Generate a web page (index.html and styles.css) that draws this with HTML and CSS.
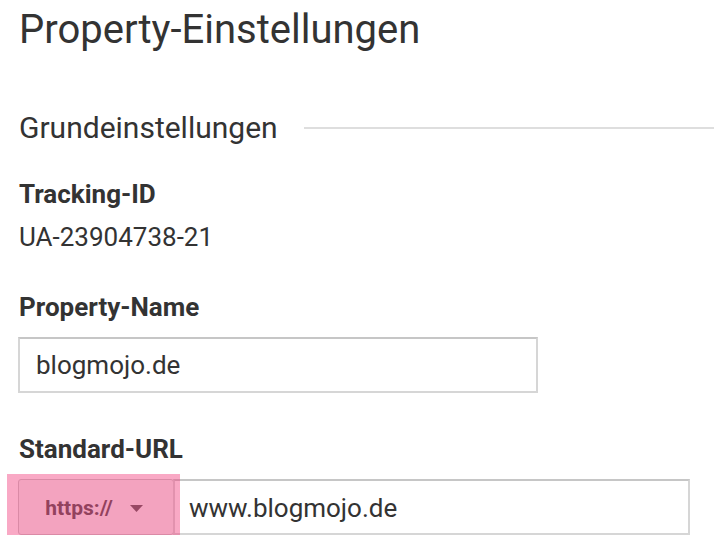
FILE: index.html
```html
<!DOCTYPE html>
<html lang="de">
<head>
<meta charset="utf-8">
<title>Property-Einstellungen</title>
<link rel="stylesheet" href="styles.css">
</head>
<body>
<main class="page">
  <h1 class="title">Property-Einstellungen</h1>
  <div class="section-head">
    <h2 class="section-title">Grundeinstellungen</h2>
    <div class="section-rule"></div>
  </div>
  <div class="field field-tracking">
    <div class="label">Tracking-ID</div>
    <div class="value">UA-23904738-21</div>
  </div>
  <div class="field field-name">
    <div class="label">Property-Name</div>
    <div class="text-input name-input">blogmojo.de</div>
  </div>
  <div class="field field-url">
    <div class="label">Standard-URL</div>
    <div class="url-row">
      <div class="protocol">
        <span class="protocol-text">https://</span>
        <svg class="caret" width="13" height="7" viewBox="0 0 13 7"><path d="M0 0 H13 L6.5 7 Z" fill="#555"/></svg>
      </div>
      <div class="text-input url-input">www.blogmojo.de</div>
      <div class="highlight"></div>
    </div>
  </div>
</main>
</body>
</html>
```
FILE: styles.css
```css
html, body {
  margin: 0;
  padding: 0;
  background: #fff;
}
body {
  font-family: Roboto, "Liberation Sans", sans-serif;
  color: #333;
  overflow: hidden;
}
.page {
  padding: 8px 0 0 19px;
}
.title {
  margin: 0;
  font-size: 40px;
  line-height: 44px;
  font-weight: 400;
  color: #333;
}
.section-head {
  display: flex;
  align-items: center;
  margin-top: 59px;
}
.section-title {
  margin: 0;
  font-size: 30px;
  line-height: 34px;
  font-weight: 400;
  color: #333;
  white-space: nowrap;
}
.section-rule {
  flex: 1;
  height: 2px;
  background: #dedede;
  margin-left: 26px;
}
.label {
  font-size: 26px;
  line-height: 30px;
  font-weight: 700;
  color: #333;
}
.value {
  font-size: 26px;
  line-height: 30px;
  margin-top: 13px;
  color: #333;
}
.field-tracking {
  margin-top: 34px;
}
.field-name {
  margin-top: 40px;
}
.field-url {
  margin-top: 41px;
}
.text-input {
  box-sizing: border-box;
  height: 56px;
  display: flex;
  align-items: center;
  font-size: 26px;
  line-height: 30px;
  color: #333;
  border: 2px solid #d6d6d6;
  border-top-color: #c6c6c6;
  background: #fff;
}
.name-input {
  width: 520px;
  margin-left: -1px;
  margin-top: 15px;
  padding-left: 16px;
}
.url-row {
  position: relative;
  display: flex;
  margin-top: 15px;
  margin-left: -1px;
  width: 672px;
}
.protocol {
  box-sizing: border-box;
  width: 156px;
  height: 56px;
  display: flex;
  align-items: center;
  justify-content: center;
  gap: 17px;
  background: #f4f4f4;
  border: 1px solid #c8c8c8;
  border-radius: 3px;
  padding-right: 4px;
}
.protocol-text {
  font-size: 21px;
  font-weight: 700;
  color: #4a4a4a;
  padding-top: 1px;
}
.caret {
  display: block;
  margin-top: 2px;
}
.url-input {
  flex: 1;
  margin-left: -1px;
  padding-left: 14px;
  padding-top: 2px;
}
.highlight {
  position: absolute;
  left: -11px;
  top: -5px;
  width: 173px;
  height: 67px;
  background: rgba(242, 55, 120, 0.43);
  pointer-events: none;
}
```
